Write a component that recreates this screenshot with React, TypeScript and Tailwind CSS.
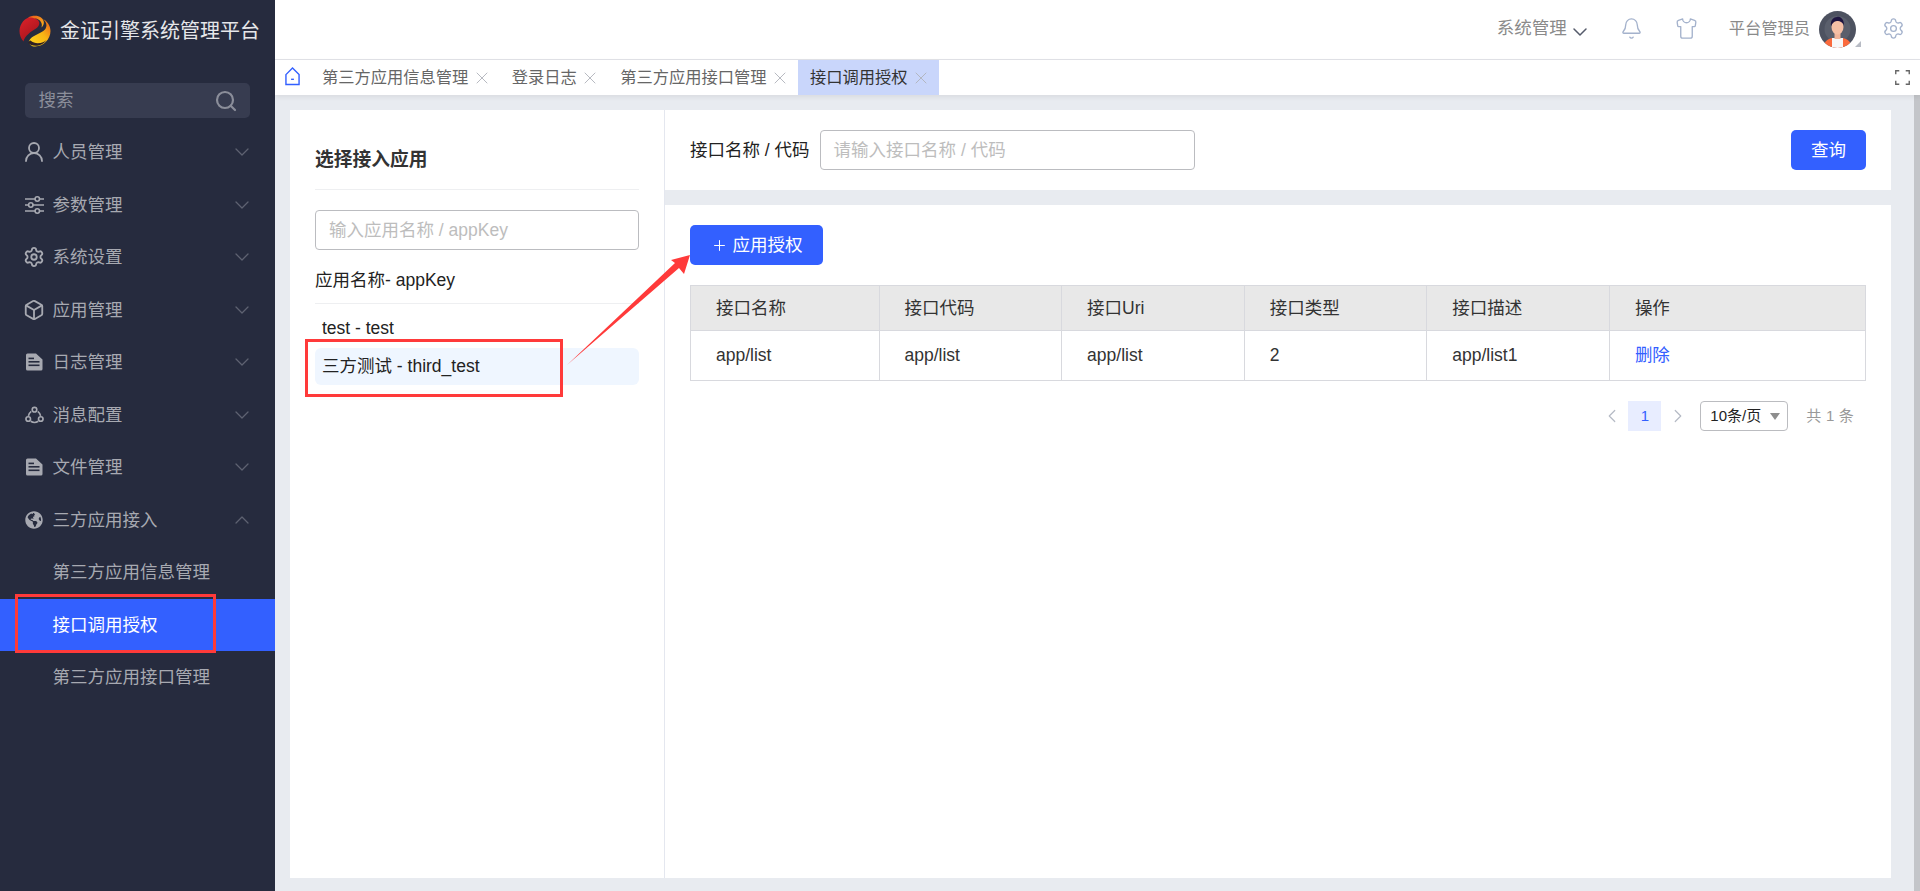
import React from "react";
import { Bell, ChevronDown, ChevronLeft, ChevronRight, ChevronUp, Plus, Search, Settings, Shirt, UserRound, X, Box } from "lucide-react";
import { FaGlobeAmericas } from "react-icons/fa";

const FileIcon = () => (
  <svg viewBox="0 0 18 18" className="w-[18px] h-[18px]" fill="currentColor">
    <path d="M2.5 0.5H11L17.5 6.5V16a1.5 1.5 0 0 1-1.5 1.5H2.5A1.5 1.5 0 0 1 1 16V2A1.5 1.5 0 0 1 2.5 .5Z" />
    <rect x="3.5" y="8" width="11" height="1.6" fill="#262b3e" />
    <rect x="3.5" y="11.5" width="11" height="1.6" fill="#262b3e" />
    <rect x="3.5" y="4.6" width="5.5" height="1.6" fill="#262b3e" />
  </svg>
);

const ClusterIcon = () => (
  <svg viewBox="0 0 20 18" className="w-[19px] h-[18px]" fill="none" stroke="currentColor" strokeWidth="1.7">
    <circle cx="10" cy="3.4" r="2.4" />
    <circle cx="3.4" cy="13.2" r="2.4" />
    <circle cx="16.6" cy="13.2" r="2.4" />
    <path d="M6.6 5.2A7.6 7.6 0 0 0 3.6 10" />
    <path d="M13.4 5.2A7.6 7.6 0 0 1 16.4 10" />
    <path d="M6 15.6a7.6 7.6 0 0 0 8 0" />
  </svg>
);

const SlidersIcon = () => (
  <svg viewBox="0 0 19 18" className="w-[19px] h-[18px]" fill="none" stroke="currentColor" strokeWidth="1.6">
    <path d="M0 3h10M14.600 3H19" />
    <circle cx="12.300" cy="3" r="2.200" />
    <path d="M0 9h3.500M8 9h11" />
    <circle cx="5.800" cy="9" r="2.200" />
    <path d="M0 15h10M14.600 15H19" />
    <circle cx="12.300" cy="15" r="2.200" />
  </svg>
);

const Logo = () => (
  <svg viewBox="0 0 32 32" className="w-[32px] h-[32px] shrink-0">
    <defs>
      <linearGradient id="lg1" x1="0" y1="0" x2="0.6" y2="1">
        <stop offset="0" stopColor="#e0222a" />
        <stop offset="1" stopColor="#a5151d" />
      </linearGradient>
      <linearGradient id="lg2" x1="0" y1="1" x2="1" y2="0">
        <stop offset="0" stopColor="#ffd91e" />
        <stop offset="0.55" stopColor="#f9b414" />
        <stop offset="1" stopColor="#e8541c" />
      </linearGradient>
      <linearGradient id="lg3" x1="0" y1="0" x2="1" y2="0.6">
        <stop offset="0" stopColor="#e8541c" />
        <stop offset="1" stopColor="#f8a51a" />
      </linearGradient>
    </defs>
    <path d="M13 1.5C6 2.5 .5 8.5 .5 16c0 4 1.5 8 4 10.500C6 20.500 12 16.500 17 13.500C21 11 21.500 6.500 18 4.500C16.500 3.500 15 2.500 13 1.500Z" fill="url(#lg1)" />
    <path d="M9 2.500C13 .2 19 .2 22 2.500C26 5.500 25.500 10 22.500 12.500C24 8 21 4.500 17 3.500C14 2.800 11.500 2.300 9 2.500Z" fill="url(#lg3)" />
    <path d="M23 3.500C27 6 29 10 26 14.500C22 19 12.500 20 10 26C9.500 28 11 30 13.500 31.200C23 33 31.500 25 31.500 16C31.500 10.500 28 5.500 23 3.500Z" fill="url(#lg2)" />
    <path d="M9.500 28C12 31.500 22 33 27.500 25C25 27.500 17 30.500 11.500 25.500C10 25.500 9.500 27 9.500 28Z" fill="#2e2024" />
  </svg>
);

const Avatar = () => (
  <svg viewBox="0 0 37 37" className="w-[37px] h-[37px]">
    <defs>
      <clipPath id="av"><circle cx="18.5" cy="18.5" r="18.5" /></clipPath>
    </defs>
    <g clipPath="url(#av)">
      <rect width="37" height="37" fill="#4d5260" />
      <circle cx="18.5" cy="18" r="13" fill="#5a5f6c" />
      <path d="M4 37c1-7 5-9 9-10h11c4 1 8 3 9 10Z" fill="#fb6a3c" />
      <path d="M13 27h11v10H13Z" fill="#f7f7f7" />
      <rect x="15.5" y="21" width="6" height="7" fill="#f0b49a" />
      <ellipse cx="18.5" cy="16" rx="6" ry="7.5" fill="#f5bfa5" />
      <path d="M12 15c-1-6 3-9 6-9 2-1 7 1 7 8-2-3-4-4-6-4-3 0-5 1-7 5Z" fill="#1e1440" />
    </g>
  </svg>
);

const menu: { icon: React.ReactNode; label: string; open?: boolean }[] = [
  { icon: <UserRound className="w-[24px] h-[24px] -ml-[3px]" strokeWidth={1.8} />, label: "人员管理" },
  { icon: <SlidersIcon />, label: "参数管理" },
  { icon: <Settings className="w-[22px] h-[22px] -ml-[2px]" strokeWidth={2} />, label: "系统设置" },
  { icon: <Box className="w-[22px] h-[22px] -ml-[2px]" strokeWidth={2} />, label: "应用管理" },
  { icon: <FileIcon />, label: "日志管理" },
  { icon: <ClusterIcon />, label: "消息配置" },
  { icon: <FileIcon />, label: "文件管理" },
  { icon: <FaGlobeAmericas className="w-[18px] h-[18px]" />, label: "三方应用接入", open: true },
];
const subMenu = [
  { label: "第三方应用信息管理" },
  { label: "接口调用授权", active: true },
  { label: "第三方应用接口管理" },
];
const tabs = [
  { label: "第三方应用信息管理" },
  { label: "登录日志" },
  { label: "第三方应用接口管理" },
  { label: "接口调用授权", active: true },
];
const columns = ["接口名称", "接口代码", "接口Uri", "接口类型", "接口描述", "操作"];
const row = ["app/list", "app/list", "app/list", "2", "app/list1"];
const firstCol = "w-[188.500px] shrink-0 pl-[25px] border-r border-[#d8d9de] flex items-center";
const colClass = "w-[182.600px] shrink-0 pl-[25px] border-r border-[#d8d9de] flex items-center";

export default function App() {
  return (
    <div
      className="relative flex w-[1920px] h-[891px] overflow-hidden bg-[#e8ebf0] text-[17.5px] text-[#222]"
      style={{ fontFamily: '"Liberation Sans", "Noto Sans CJK SC", sans-serif' }}
    >
      <aside className="w-[275px] shrink-0 bg-[#262b3e] flex flex-col">
        <div className="h-[60px] flex items-center pl-[19px] pt-[1px] gap-[9px]">
          <Logo />
          <span className="text-[20px] text-[#e6e7ea] whitespace-nowrap">金证引擎系统管理平台</span>
        </div>
        <div className="mt-[23px] mx-[25px] h-[35px] rounded-[5px] bg-[#373c50] flex items-center justify-between pl-[13.5px] pr-[12px] text-[#8b8e9a]">
          <span>搜索</span>
          <Search className="w-[24px] h-[24px]" strokeWidth={2.2} />
        </div>
        <nav className="mt-[8px] flex flex-col text-[#a7a9b1]">
          {menu.map((m) => (
            <div key={m.label} className="h-[52.5px] flex items-center pl-[25px] pr-[21px]">
              <span className="w-[27.5px] shrink-0 flex items-center">{m.icon}</span>
              <span className="flex-1">{m.label}</span>
              {m.open ? (
                <ChevronUp className="w-[24px] h-[24px] text-[#5e6271]" strokeWidth={1.3} />
              ) : (
                <ChevronDown className="w-[24px] h-[24px] text-[#5e6271]" strokeWidth={1.3} />
              )}
            </div>
          ))}
          {subMenu.map((s) => (
            <div
              key={s.label}
              className={
                s.active
                  ? "h-[52.5px] flex items-center pl-[52.5px] bg-[#3360ff] text-white"
                  : "h-[52.5px] flex items-center pl-[52.5px]"
              }
            >
              {s.label}
            </div>
          ))}
        </nav>
      </aside>

      <main className="flex-1 min-w-0 flex flex-col">
        <header className="h-[60px] shrink-0 bg-white border-b border-[#e2e3e8] flex items-center justify-end pr-[15px] pb-[2px] text-[#8a8a8a]">
          <span>系统管理</span>
          <ChevronDown className="ml-[1px] mt-[6px] w-[24px] h-[24px] text-[#555b6b]" strokeWidth={1.5} />
          <Bell className="ml-[28px] w-[23px] h-[23px] text-[#a4b2cc]" strokeWidth={1.4} />
          <Shirt className="ml-[32px] w-[23px] h-[23px] text-[#a4b2cc]" strokeWidth={1.4} />
          <span className="ml-[31px] text-[16.25px]">平台管理员</span>
          <div className="relative ml-[9px] mt-[2px]">
            <Avatar />
            <span className="absolute right-[-5px] bottom-[1px] w-0 h-0 border-l-[6px] border-l-transparent border-b-[6px] border-b-[#b7bbc4]" />
          </div>
          <Settings className="ml-[26px] w-[23px] h-[23px] text-[#a4b2cc]" strokeWidth={1.4} />
        </header>

        <div className="h-[35px] shrink-0 bg-white flex items-stretch text-[16.25px] text-[#666] shadow-[0_2px_5px_rgba(0,0,0,0.07)] z-10 pl-[10px] pr-[10px]">
          <svg viewBox="0 0 16 20" className="w-[15px] h-[19px] self-center mr-[9.5px] mt-[-2px]" fill="none" stroke="#3360ff" strokeWidth="1.5">
            <path d="M1 8L8 1l7 7v10.5H1Z" />
            <path d="M6.5 13h3" />
          </svg>
          {tabs.map((t) => (
            <div
              key={t.label}
              className={
                t.active
                  ? "flex items-center pl-[12.5px] pr-[7.5px] gap-[3.5px] bg-[#c9d6fb] text-[#333]"
                  : "flex items-center pl-[12.5px] pr-[7.5px] gap-[3.5px]"
              }
            >
              <span>{t.label}</span>
              <X className="w-[20px] h-[20px] text-[#b0b3bb]" strokeWidth={1.1} />
            </div>
          ))}
          <svg viewBox="0 0 14 14" className="ml-auto w-[15px] h-[15px] self-center" fill="none" stroke="#666" strokeWidth="1.3">
            <path d="M0.7 4V0.7H4M10 0.7h3.3V4M13.3 10v3.3H10M4 13.3H0.7V10" />
          </svg>
        </div>

        <div className="flex-1 min-h-0 flex">
          <div className="flex-1 min-w-0 pl-[15px] pr-[23px] pt-[15px] pb-[13px]">
            <div className="h-full flex">
              <section className="w-[375px] shrink-0 bg-white border-r border-[#e4e7ef] pl-[25px] pr-[25px] flex flex-col">
                <h2 className="h-[80px] shrink-0 flex items-center pt-[22px] text-[18.75px] font-bold text-[#333] border-b border-[#eeeff1]">选择接入应用</h2>
                <div className="mt-[20px] h-[40px] shrink-0 rounded-[4px] border border-[#bbbcc0] flex items-center pl-[13px] text-[#bdbdbd]">输入应用名称 / appKey</div>
                <div className="h-[54px] shrink-0 flex items-center border-b border-[#eeeff1] pt-[8px] text-[#222]">应用名称- appKey</div>
                <div className="h-[44px] shrink-0 flex items-center pl-[7px] pt-[4px] text-[#222]">test - test</div>
                <div className="h-[37px] shrink-0 flex items-center pl-[7px] rounded-[6px] bg-[#eff6ff] text-[#222]">三方测试 - third_test</div>
              </section>

              <div className="flex-1 min-w-0 flex flex-col gap-[15px]">
                <section className="h-[80px] shrink-0 bg-white flex items-center pl-[25px] pr-[25px]">
                  <span className="text-[#222]">接口名称 / 代码</span>
                  <div className="ml-[10px] w-[375px] h-[40px] rounded-[4px] border border-[#bbbcc0] flex items-center pl-[13px] text-[#bdbdbd]">请输入接口名称 / 代码</div>
                  <button className="ml-auto w-[75px] h-[40px] rounded-[5px] bg-[#3360ff] text-white">查询</button>
                </section>
                <section className="flex-1 min-h-0 bg-white pl-[25px] pr-[25px] pt-[20px]">
                  <button className="w-[133px] h-[40px] rounded-[5px] bg-[#3360ff] text-white flex items-center justify-center gap-[5px]">
                    <Plus className="w-[17px] h-[17px]" strokeWidth={1.4} />
                    应用授权
                  </button>
                  <div className="mt-[20px] border border-[#d8d9de] text-[#333]">
                    <div className="h-[45px] flex bg-[#e8e8e8] border-b border-[#d8d9de]">
                      {columns.map((c, i) =>
                        i < 5 ? (
                          <div key={c} className={i === 0 ? firstCol : colClass}>{c}</div>
                        ) : (
                          <div key={c} className="flex-1 pl-[25px] flex items-center">{c}</div>
                        )
                      )}
                    </div>
                    <div className="h-[49px] flex">
                      {row.map((c, i) => (
                        <div key={i} className={i === 0 ? firstCol : colClass}>{c}</div>
                      ))}
                      <div className="flex-1 pl-[25px] flex items-center text-[#3360ff]">删除</div>
                    </div>
                  </div>
                  <div className="mt-[20px] mr-[12px] h-[30px] flex items-center justify-end text-[15px]">
                    <ChevronLeft className="w-[22px] h-[22px] text-[#b5bac5]" strokeWidth={1.3} />
                    <span className="ml-[5px] w-[33px] h-[30px] bg-[#e8edff] text-[#3360ff] flex items-center justify-center">1</span>
                    <ChevronRight className="ml-[6px] w-[22px] h-[22px] text-[#b5bac5]" strokeWidth={1.3} />
                    <div className="ml-[11px] w-[88px] h-[30px] rounded-[4px] border border-[#bbbcc0] flex items-center pl-[9px] text-[#222] relative">
                      10条/页
                      <span className="absolute right-[7px] top-[11px] w-0 h-0 border-l-[5px] border-r-[5px] border-t-[7px] border-l-transparent border-r-transparent border-t-[#8e8e8e]" />
                    </div>
                    <span className="ml-[18px] text-[#999] tracking-[0.2px] whitespace-pre">共 1 条</span>
                  </div>
                </section>
              </div>
            </div>
          </div>
          <div className="w-[6px] shrink-0 bg-[#c3c5c9]" />
        </div>
      </main>

      {/* annotations drawn over the screenshot */}
      <div className="absolute left-[15px] top-[594px] w-[201px] h-[59px] border-[3.5px] border-[#ff3a3a]" />
      <div className="absolute left-[305px] top-[339px] w-[258px] h-[58px] border-[3.5px] border-[#ff3a3a]" />
      <svg className="absolute left-0 top-0 w-[1920px] h-[891px] pointer-events-none" viewBox="0 0 1920 891">
        <polygon points="567,365 675,263 671,260 690,255 684,274 679,268" fill="#ff3a3a" />
      </svg>
    </div>
  );
}
